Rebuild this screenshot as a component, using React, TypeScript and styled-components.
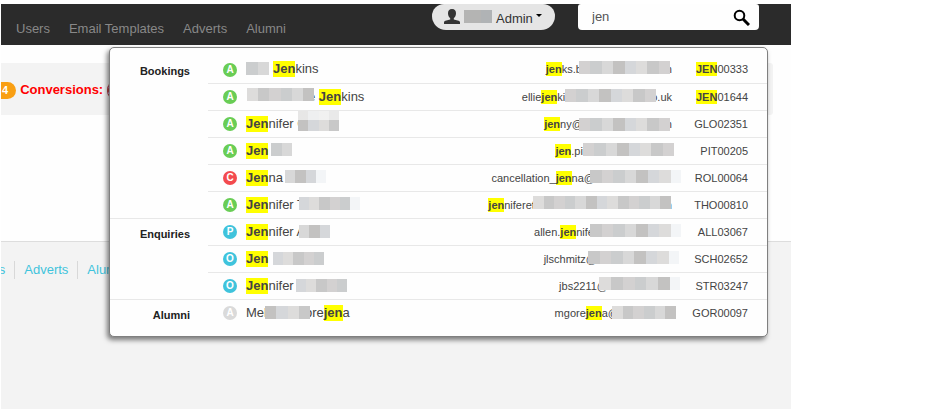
import React from "react";
import styled, { createGlobalStyle, css } from "styled-components";

const Global = createGlobalStyle`
  *, *::before, *::after { box-sizing: border-box; }
  html, body, #root { height: 100%; }
  body { margin: 0; background: #fff; overflow: hidden; }
`;

const Page = styled.div`
  display: flex;
  flex-direction: column;
  position: relative;
  min-height: 100%;
  margin: 0 145px 0 1px;
  padding-top: 4px;
  overflow: hidden;
  font-family: "Liberation Sans", Arial, sans-serif;
  font-size: 13px;
  line-height: 18px;
  color: #333;
`;

const Header = styled.header`
  display: flex;
  align-items: flex-start;
  height: 41px;
  padding-right: 32px;
  background: #2b2b2b;
`;

const Nav = styled.nav`
  display: flex;
  flex: 1;
  gap: 19px;
  padding: 16px 0 0 15px;
`;

const NavLink = styled.a`
  color: #888;
  text-decoration: none;
  white-space: nowrap;
`;

const UserButton = styled.button`
  display: flex;
  align-items: center;
  width: 123px;
  height: 26px;
  margin-right: 23px;
  padding: 0 12px;
  border: 0;
  border-radius: 12px 12px 14px 14px;
  background: #e5e5e5;
  color: #333;
  font: inherit;
`;

const UserMask = styled.span`
  width: 28px;
  height: 13px;
  margin: 0 0 1px 4px;
  background: linear-gradient(90deg, #b4b4b3 60%, #b0b3b5 60%);
`;

const UserName = styled.span`
  padding: 4px 3px 0 4px;
`;

const Caret = styled.span`
  margin-bottom: 3px;
  border: 3px solid transparent;
  border-top-color: #000;
  border-bottom: 0;
`;

const SearchBox = styled.form`
  display: flex;
  align-items: center;
  width: 181px;
  height: 26px;
  padding: 0 9px 0 14px;
  border-radius: 3px 3px 4px 4px;
  background: #fefefe;
`;

const SearchInput = styled.input`
  flex: 1;
  min-width: 0;
  padding: 0;
  border: 0;
  outline: 0;
  background: transparent;
  color: #555;
  font: inherit;
`;

const SearchButton = styled.button`
  display: flex;
  padding: 0;
  border: 0;
  background: none;
`;

const Main = styled.main`
  height: 196px;
  padding: 18px 18px 0 0;
  background: #fefefe;
`;

const Stats = styled.section`
  display: flex;
  align-items: center;
  gap: 4px;
  height: 52px;
  padding-top: 2px;
  border-radius: 0 3px 3px 0;
  background: #f3f3f3;
  color: #f00;
  font-weight: bold;
`;

const Count = styled.span<{ $tone: string; $cut?: boolean }>`
  min-width: 15px;
  height: 17px;
  padding: 0 8px 0 1px;
  border-radius: ${(p) => (p.$cut ? "0 9px 9px 0" : "9px")};
  background: ${(p) => p.$tone};
  color: #fff;
  font-size: 11px;
  line-height: 17px;
`;

const Footer = styled.footer`
  display: flex;
  flex: 1;
  align-items: flex-start;
  padding-top: 19px;
  border-top: 1px solid #ddd;
  background: #f3f3f3;
`;

const FooterLink = styled.a`
  padding: 0 9px;
  border-right: 1px solid #d8d8d8;
  color: #3fc3dc;
  text-decoration: none;

  &:first-child {
    margin-left: -64px;
  }
`;

const Results = styled.div`
  position: absolute;
  top: 47px;
  left: 108px;
  right: 23px;
  padding: 8px 0 10px;
  border: 1px solid #808080;
  border-radius: 5px;
  background: #fefefe;
  box-shadow: -2px 3px 5px rgba(0, 0, 0, 0.5);
`;

const Table = styled.table`
  width: 100%;
  border-spacing: 0;
  table-layout: fixed;
`;

const Group = styled.tbody`
  & + & th,
  & + & tr:first-child td {
    border-top: 1px solid #e8e8e8;
  }

  tr + tr td {
    border-top: 1px solid #e8e8e8;
  }
`;

const GroupTitle = styled.th`
  width: 98px;
  padding: 6px 18px 0 0;
  color: #222;
  font-size: 11px;
  text-align: right;
  vertical-align: top;
`;

const cell = css`
  height: 27px;
  padding: 0;
  color: #444;
  white-space: nowrap;
`;

const StatusCell = styled.td`
  ${cell}
  width: 38px;
  padding-left: 15px;
`;

const NameCell = styled.td`
  ${cell}
  padding-bottom: 1px;
  line-height: 16px;
`;

const EmailCell = styled.td`
  ${cell}
  width: 200px;
  padding-bottom: 1px;
  font-size: 11px;
  line-height: 14px;
  text-align: right;
`;

const CodeCell = styled.td`
  ${cell}
  width: 95px;
  padding: 0 19px 1px 0;
  font-size: 11px;
  line-height: 14px;
  text-align: right;
`;

const statusColors = { green: "#69cd55", red: "#f34a4e", blue: "#3fc3dc", grey: "#dadada" };
type Tone = keyof typeof statusColors;

const Status = styled.span<{ $tone: Tone }>`
  display: block;
  width: 14px;
  height: 14px;
  border-radius: 50%;
  background: ${(p) => statusColors[p.$tone]};
  color: #fff;
  font-size: 10px;
  font-weight: bold;
  line-height: 14px;
  text-align: center;
`;

const Mark = styled.mark`
  background: #ff0;
  color: #444;
  font-weight: bold;
`;

const Line = styled.span<{ $right?: boolean }>`
  display: flex;
  align-items: center;
  justify-content: ${(p) => (p.$right ? "flex-end" : "flex-start")};
  height: 18px;
  white-space: pre;
`;

const shades = ["#c8c8c8", "#d3d1d1", "#cbcdce", "#d8d8d8", "#c3c2c1", "#d5d7da", "#dddcdb"];
const mosaic = (width: number, tail: number) => {
  const solid = width - tail;
  const count = Math.max(2, Math.round(solid / 11));
  const stops = Array.from({ length: count }, (_, i) => {
    const from = Math.round((solid * i) / count);
    const to = Math.round((solid * (i + 1)) / count);
    return `${shades[(i + count) % shades.length]} ${from}px ${to}px`;
  });
  if (tail) stops.push(`#f3f5f7 ${solid}px ${width}px`);
  return `linear-gradient(90deg, ${stops.join(", ")})`;
};

type MaskProps = { $w: number; $l?: number; $r?: number; $y?: number; $tail?: number; $tall?: boolean };
const Mask = styled.span<MaskProps>`
  z-index: 1;
  flex: none;
  width: ${(p) => p.$w}px;
  height: ${(p) => (p.$tall ? 20 : 13)}px;
  margin: ${(p) => p.$y ?? 0}px ${(p) => p.$r ?? 0}px 0 ${(p) => p.$l ?? 0}px;
  background: ${(p) =>
    p.$tall
      ? "linear-gradient(#fff9 9px, transparent 9px), " + mosaic(p.$w, 0)
      : mosaic(p.$w, p.$tail ?? 0)};
`;

type Hit = { tone: Tone; letter: string; name: React.ReactNode; email: React.ReactNode; code: React.ReactNode };

const groups: { title: string; hits: Hit[] }[] = [
  {
    title: "Bookings",
    hits: [
      {
        tone: "green", letter: "A",
        name: <><Mask $w={23} $r={4} $y={-2} /><Mark>Jen</Mark>kins</>,
        email: <><Mark>jen</Mark>ks.b<Mask $w={91} $l={-3} $r={-7} $y={-3} />m</>,
        code: <><Mark>JEN</Mark>00333</>,
      },
      {
        tone: "green", letter: "A",
        name: <><Mask $w={67} $l={1} $r={-6} $y={-4} />e <Mark>Jen</Mark>kins</>,
        email: <>ellie<Mark>jen</Mark>ki<Mask $w={91} $r={-5} $y={-2} />o.uk</>,
        code: <><Mark>JEN</Mark>01644</>,
      },
      {
        tone: "green", letter: "A",
        name: <><Mark>Jen</Mark>nifer C<Mask $w={41} $l={-9} $y={-6} $tall /></>,
        email: <><Mark>jen</Mark>ny@<Mask $w={91} $l={-4} $r={-7} $y={1} />m</>,
        code: "GLO02351",
      },
      {
        tone: "green", letter: "A",
        name: <><Mark>Jen</Mark><Mask $w={21} $l={3} $y={-2} /></>,
        email: <><Mark>jen</Mark>.pit<Mask $w={91} $l={-3} $r={-2} $y={-3} /></>,
        code: "PIT00205",
      },
      {
        tone: "red", letter: "C",
        name: <><Mark>Jen</Mark>na<Mask $w={41} $l={2} $y={-3} $tail={10} /></>,
        email: <>cancellation_<Mark>jen</Mark>na@<Mask $w={91} $l={-5} $r={-9} $y={-3} $tail={10} /></>,
        code: "ROL00064",
      },
      {
        tone: "green", letter: "A",
        name: <><Mark>Jen</Mark>nifer T<Mask $w={61} $l={-6} $y={-2} $tail={10} /></>,
        email: <><Mark>jen</Mark>niferet<Mask $w={138} $l={-2} $r={-8} $y={-5} />m</>,
        code: "THO00810",
      },
    ],
  },
  {
    title: "Enquiries",
    hits: [
      {
        tone: "blue", letter: "P",
        name: <><Mark>Jen</Mark>nifer A<Mask $w={31} $l={-6} /></>,
        email: <>allen.<Mark>jen</Mark>nife<Mask $w={91} $l={-4} $r={-9} $y={-3} $tail={10} /></>,
        code: "ALL03067",
      },
      {
        tone: "blue", letter: "O",
        name: <><Mark>Jen</Mark><Mask $w={51} $l={5} /></>,
        email: <>jlschmitz@<Mask $w={91} $l={-9} $r={-7} $y={-3} $tail={10} /></>,
        code: "SCH02652",
      },
      {
        tone: "blue", letter: "O",
        name: <><Mark>Jen</Mark>nifer<Mask $w={51} $l={2} /></>,
        email: <>jbs2211@<Mask $w={81} $l={-9} $r={-8} $y={-5} $tail={10} /></>,
        code: "STR03247",
      },
    ],
  },
  {
    title: "Alumni",
    hits: [
      {
        tone: "grey", letter: "A",
        name: <>Mel<Mask $w={45} $l={-2} $r={-5} />ore<Mark>jen</Mark>a</>,
        email: <>mgore<Mark>jen</Mark>a@<Mask $w={64} $l={-7} $r={-4} /></>,
        code: "GOR00097",
      },
    ],
  },
];

export default function App() {
  return (
    <>
      <Global />
      <Page>
        <Header>
          <Nav>
            {["Users", "Email Templates", "Adverts", "Alumni"].map((label) => (
              <NavLink href="#" key={label}>{label}</NavLink>
            ))}
          </Nav>
          <UserButton type="button">
            <svg width="16" height="17" viewBox="0 0 16 17" aria-hidden="true">
              <path fill="#333" d="M8 0c2.800 0 4 1.800 4 4.200 0 2-.9 4-2.200 5v1.200l4.800 1.300c1 .4 1.400 1 1.400 1.800V15H0v-1.500c0-.8.4-1.400 1.400-1.800l4.800-1.300V9.200C4.900 8.200 4 6.200 4 4.200 4 1.800 5.200 0 8 0Z" />
            </svg>
            <UserMask />
            <UserName>Admin</UserName>
            <Caret />
          </UserButton>
          <SearchBox onSubmit={(e) => e.preventDefault()}>
            <SearchInput aria-label="Search" defaultValue="jen" />
            <SearchButton type="submit" aria-label="Search">
              <svg width="17" height="17" viewBox="0 0 17 17" fill="none" stroke="#000" aria-hidden="true">
                <circle cx="6.500" cy="6.500" r="4.800" strokeWidth="2" />
                <path d="M10 10l6 6" strokeWidth="3" />
              </svg>
            </SearchButton>
          </SearchBox>
        </Header>
        <Main>
          <Stats>
            <Count $tone="#f99f13" $cut>4</Count>
            <span>Conversions:</span>
            <Count $tone="#b94a48">2</Count>
          </Stats>
        </Main>
        <Footer>
          {["Templates", "Adverts", "Alumni"].map((label) => (
            <FooterLink href="#" key={label}>{label}</FooterLink>
          ))}
        </Footer>
        <Results>
          <Table>
            <colgroup>
              <col width="98" />
              <col width="38" />
              <col />
              <col width="200" />
              <col width="95" />
            </colgroup>
            {groups.map((group) => (
              <Group key={group.title}>
                {group.hits.map((hit, i) => (
                  <tr key={i}>
                    {i === 0 && <GroupTitle scope="rowgroup" rowSpan={group.hits.length}>{group.title}</GroupTitle>}
                    <StatusCell><Status $tone={hit.tone}>{hit.letter}</Status></StatusCell>
                    <NameCell><Line>{hit.name}</Line></NameCell>
                    <EmailCell><Line $right>{hit.email}</Line></EmailCell>
                    <CodeCell><Line $right>{hit.code}</Line></CodeCell>
                  </tr>
                ))}
              </Group>
            ))}
          </Table>
        </Results>
      </Page>
    </>
  );
}
